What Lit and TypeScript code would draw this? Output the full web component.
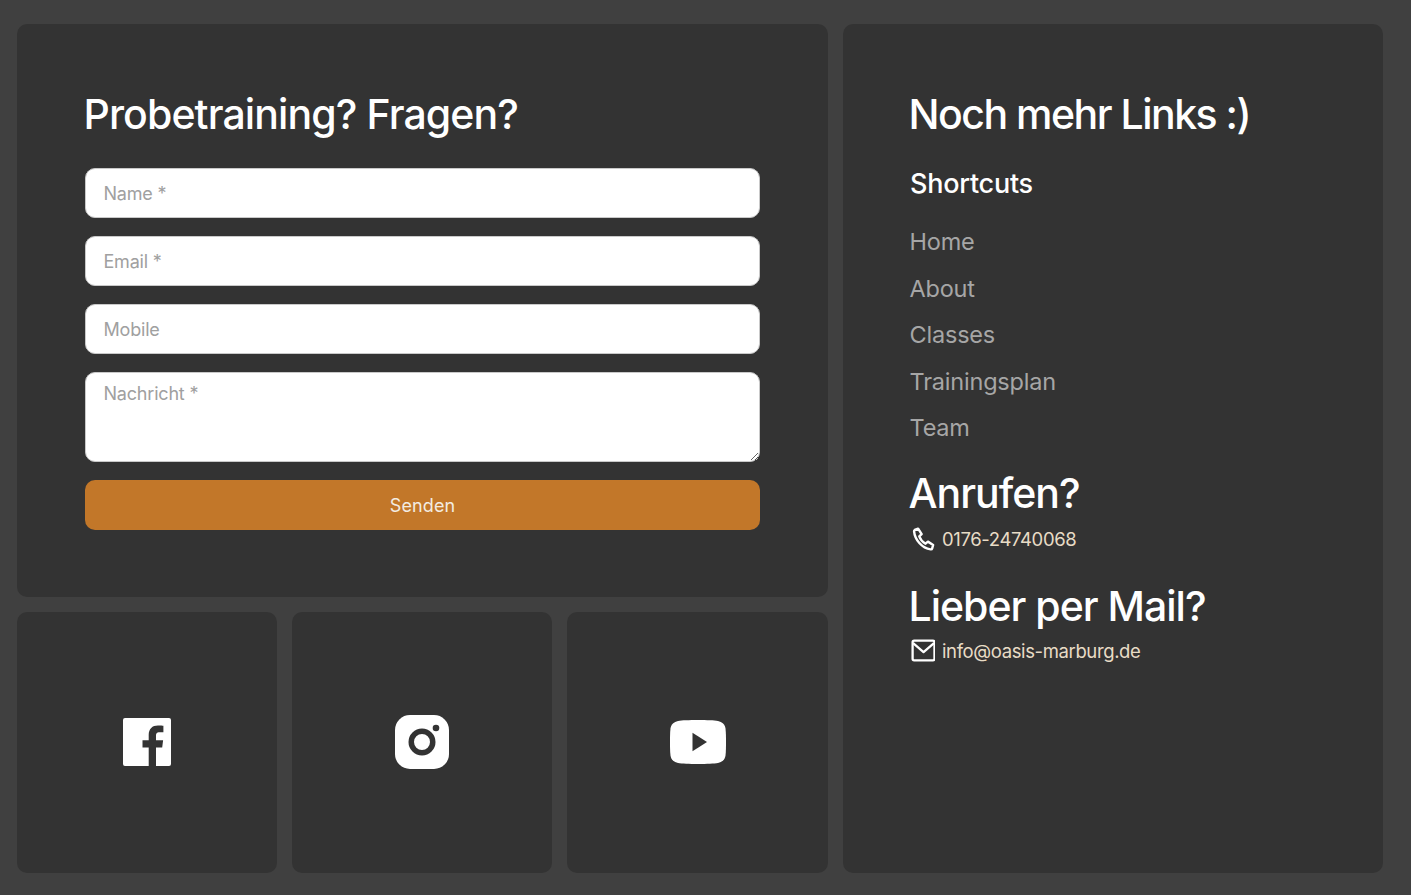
import { LitElement, html, css } from "lit";
import { customElement } from "lit/decorators.js";

@customElement("app-root")
export class AppRoot extends LitElement {
  static styles = css`
    :host { display: block; font-family: "Inter", "Liberation Sans", sans-serif; }
    .page {
      box-sizing: border-box; width: 1411px; height: 895px; background: #404040;
      padding: 24px 28px 22px 17px;
      display: grid; grid-template-columns: 811px 540px; gap: 15px;
    }
    .left { display: grid; grid-template-rows: 573px 261px; gap: 15px; min-height: 0; }
    .card { background: #333333; border-radius: 10px; box-sizing: border-box; }
    .form-card { padding: 67px 68px 0; }
    h2 {
      margin: 0 0 0 -1.5px; color: #fff; font-weight: 500; font-size: 41px; line-height: 46px;
      letter-spacing: -1px;
    }
    h2.wide { letter-spacing: -0.9px; }
    h2.tight { letter-spacing: -1.5px; }
    form { display: flex; flex-direction: column; gap: 18px; margin-top: 31px; }
    input, textarea, button {
      box-sizing: border-box; width: 100%; font: inherit; font-size: 18px; margin: 0; display: block;
    }
    input, textarea {
      height: 50px; padding: 0 17.5px; background: #fff; border: 1px solid #c9c9c9;
      border-radius: 10px; color: #333; outline: none; letter-spacing: -0.2px;
    }
    textarea { height: 90px; padding: 10px 17.5px; line-height: 22px; resize: vertical; }
    ::placeholder { color: #a0a0a0; opacity: 1; }
    button {
      height: 50px; background: #c27729; border: none; border-radius: 10px; color: #f3ece2; letter-spacing: 0.1px;
    }
    .social { display: grid; grid-template-columns: 260px 260px 261px; gap: 15px; }
    .tile { display: flex; align-items: center; justify-content: center; padding-bottom: 2px; }
    .tile svg { display: block; }
    .links { padding: 67px 67px 0; }
    h3 { margin: 31px 0 0; color: #fff; font-weight: 500; font-size: 27px; line-height: 32px; letter-spacing: -0.25px; }
    ul { list-style: none; margin: 19px 0 0; padding: 0; display: flex; flex-direction: column; }
    li { color: #a6a6a6; font-size: 23.5px; line-height: 46.5px; letter-spacing: -0.2px; margin-left: -0.5px; }
    .sub { margin-top: 18px; }
    .sub2 { margin-top: 30px; }
    .contact {
      display: flex; align-items: center; gap: 7px; height: 28px; margin-top: 9px;
      color: #e8dcc6; font-size: 18.5px; letter-spacing: -0.38px;
    }
    .sub2 + .contact { margin-top: 8px; }
    .contact svg { display: block; flex: none; width: 25px; height: 25px; }
  `;

  render() {
    return html`
      <div class="page">
        <div class="left">
          <section class="card form-card">
            <h2 class="wide">Probetraining? Fragen?</h2>
            <form @submit=${(e: Event) => e.preventDefault()}>
              <input type="text" placeholder="Name *" />
              <input type="email" placeholder="Email *" />
              <input type="tel" placeholder="Mobile" />
              <textarea placeholder="Nachricht *"></textarea>
              <button type="submit">Senden</button>
            </form>
          </section>
          <div class="social">
            <div class="card tile">
              <svg width="48" height="48" viewBox="0 0 48 48" fill="#fff">
                <path d="M2 0h44a2 2 0 0 1 2 2v44a2 2 0 0 1-2 2H33V29.500h6.200l.9-7.200H33v-4.600c0-2.100.6-3.500 3.600-3.500h3.800V7.800c-.7-.1-2.900-.3-5.500-.3-5.500 0-9.200 3.300-9.200 9.500v5.300h-6.200v7.200h6.200V48H2a2 2 0 0 1-2-2V2a2 2 0 0 1 2-2z" />
              </svg>
            </div>
            <div class="card tile">
              <svg width="54" height="54" viewBox="0 0 54 54">
                <rect width="54" height="54" rx="15" fill="#fff" />
                <circle cx="27" cy="27" r="10.750" fill="none" stroke="#333" stroke-width="5.500" />
                <circle cx="41" cy="13" r="3.300" fill="#333" />
              </svg>
            </div>
            <div class="card tile">
              <svg width="56" height="44" viewBox="0 0 56 44">
                <path fill="#fff" d="M28 0c9 0 16 .3 20 1C52 1.800 55 4.500 55.500 8.500c.5 4 .5 9 .5 13.500s0 9.500-.5 13.500C55 39.500 52 42.200 48 43c-4 .7-11 1-20 1s-16-.3-20-1c-4-.8-7-3.500-7.500-7.500C0 31.500 0 26.500 0 22s0-9.500.5-13.500C1 4.500 4 1.800 8 1c4-.7 11-1 20-1z" />
                <path fill="#333" d="M22.500 12.700 37 22 22.500 31.300z" />
              </svg>
            </div>
          </div>
        </div>
        <aside class="card links">
          <h2 class="tight">Noch mehr Links :)</h2>
          <h3>Shortcuts</h3>
          <ul>
            <li>Home</li>
            <li>About</li>
            <li>Classes</li>
            <li>Trainingsplan</li>
            <li>Team</li>
          </ul>
          <h2 class="sub">Anrufen?</h2>
          <div class="contact">
            <svg viewBox="-1 0 24 24" fill="none" stroke="#fff" stroke-width="2.300" stroke-linejoin="round">
              <path d="M3.500 3.800 6.800 2.500l3.400 5.300-2.300 2.200c.9 2.500 3.300 5.600 6 7l2.300-2 5 3.200-.9 3.300c-.2.700-.8 1-1.500.9C10.500 21.500 3.500 13 2.900 5c0-.5.200-1 .6-1.200z" />
            </svg>
            <span>0176-24740068</span>
          </div>
          <h2 class="sub2">Lieber per Mail?</h2>
          <div class="contact">
            <svg viewBox="-1 0 24 24" fill="none" stroke="#fff" stroke-width="2.200" stroke-linejoin="round">
              <rect x="1.500" y="2.500" width="21" height="19" rx="1.500" />
              <path d="M2 5l10 8.500L22 5" />
            </svg>
            <span>info@oasis-marburg.de</span>
          </div>
        </aside>
      </div>
    `;
  }
}
